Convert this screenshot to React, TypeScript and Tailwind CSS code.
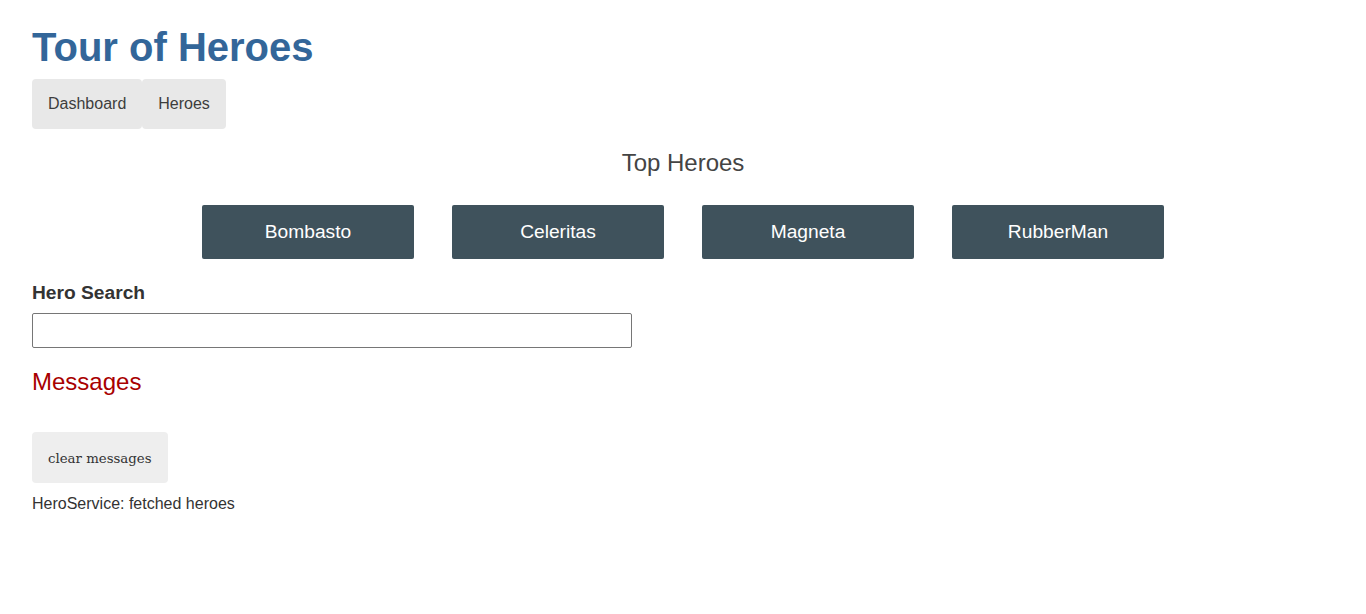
const heroes = ['Bombasto', 'Celeritas', 'Magneta', 'RubberMan']

export default function App() {
  return (
    <div className="min-h-screen bg-white px-8 pt-6 font-['Liberation_Sans',Arial,sans-serif] text-[#333]">
      <h1 className="text-[40px] leading-[46px] font-bold text-[#336699]">Tour of Heroes</h1>

      <nav className="mt-[9px] flex">
        <a className="flex h-[50px] items-center rounded bg-[#e8e8e8] px-4 text-base text-[#3d3d3d]">Dashboard</a>
        <a className="flex h-[50px] items-center rounded bg-[#e8e8e8] px-4 text-base text-[#3d3d3d]">Heroes</a>
      </nav>

      <h2 className="mt-5 text-center text-2xl leading-[28px] text-[#444]">Top Heroes</h2>

      <div className="mt-7 flex justify-center gap-[38px]">
        {heroes.map((name) => (
          <a
            key={name}
            className="flex h-[54px] w-[212px] items-center justify-center rounded-[2px] bg-[#3f525c] text-[19.2px] text-white"
          >
            {name}
          </a>
        ))}
      </div>

      <div className="mt-[23px]">
        <label className="block text-[19.2px] leading-[22px] font-bold text-[#333]">Hero Search</label>
        <input className="mt-[9px] block h-[35px] w-[600px] rounded-[2px] border border-[#767676] px-1" />
      </div>

      <h2 className="mt-5 text-2xl leading-[28px] text-[#a80000]">Messages</h2>
      <button className="mt-9 flex h-[51px] items-center rounded bg-[#eeeeee] px-4 pt-[2px] font-['DejaVu_Serif',serif] text-[13.333px] text-[#333]">
        clear messages
      </button>
      <div className="mt-3 text-base leading-[18px] text-[#333]">HeroService: fetched heroes</div>
    </div>
  )
}
